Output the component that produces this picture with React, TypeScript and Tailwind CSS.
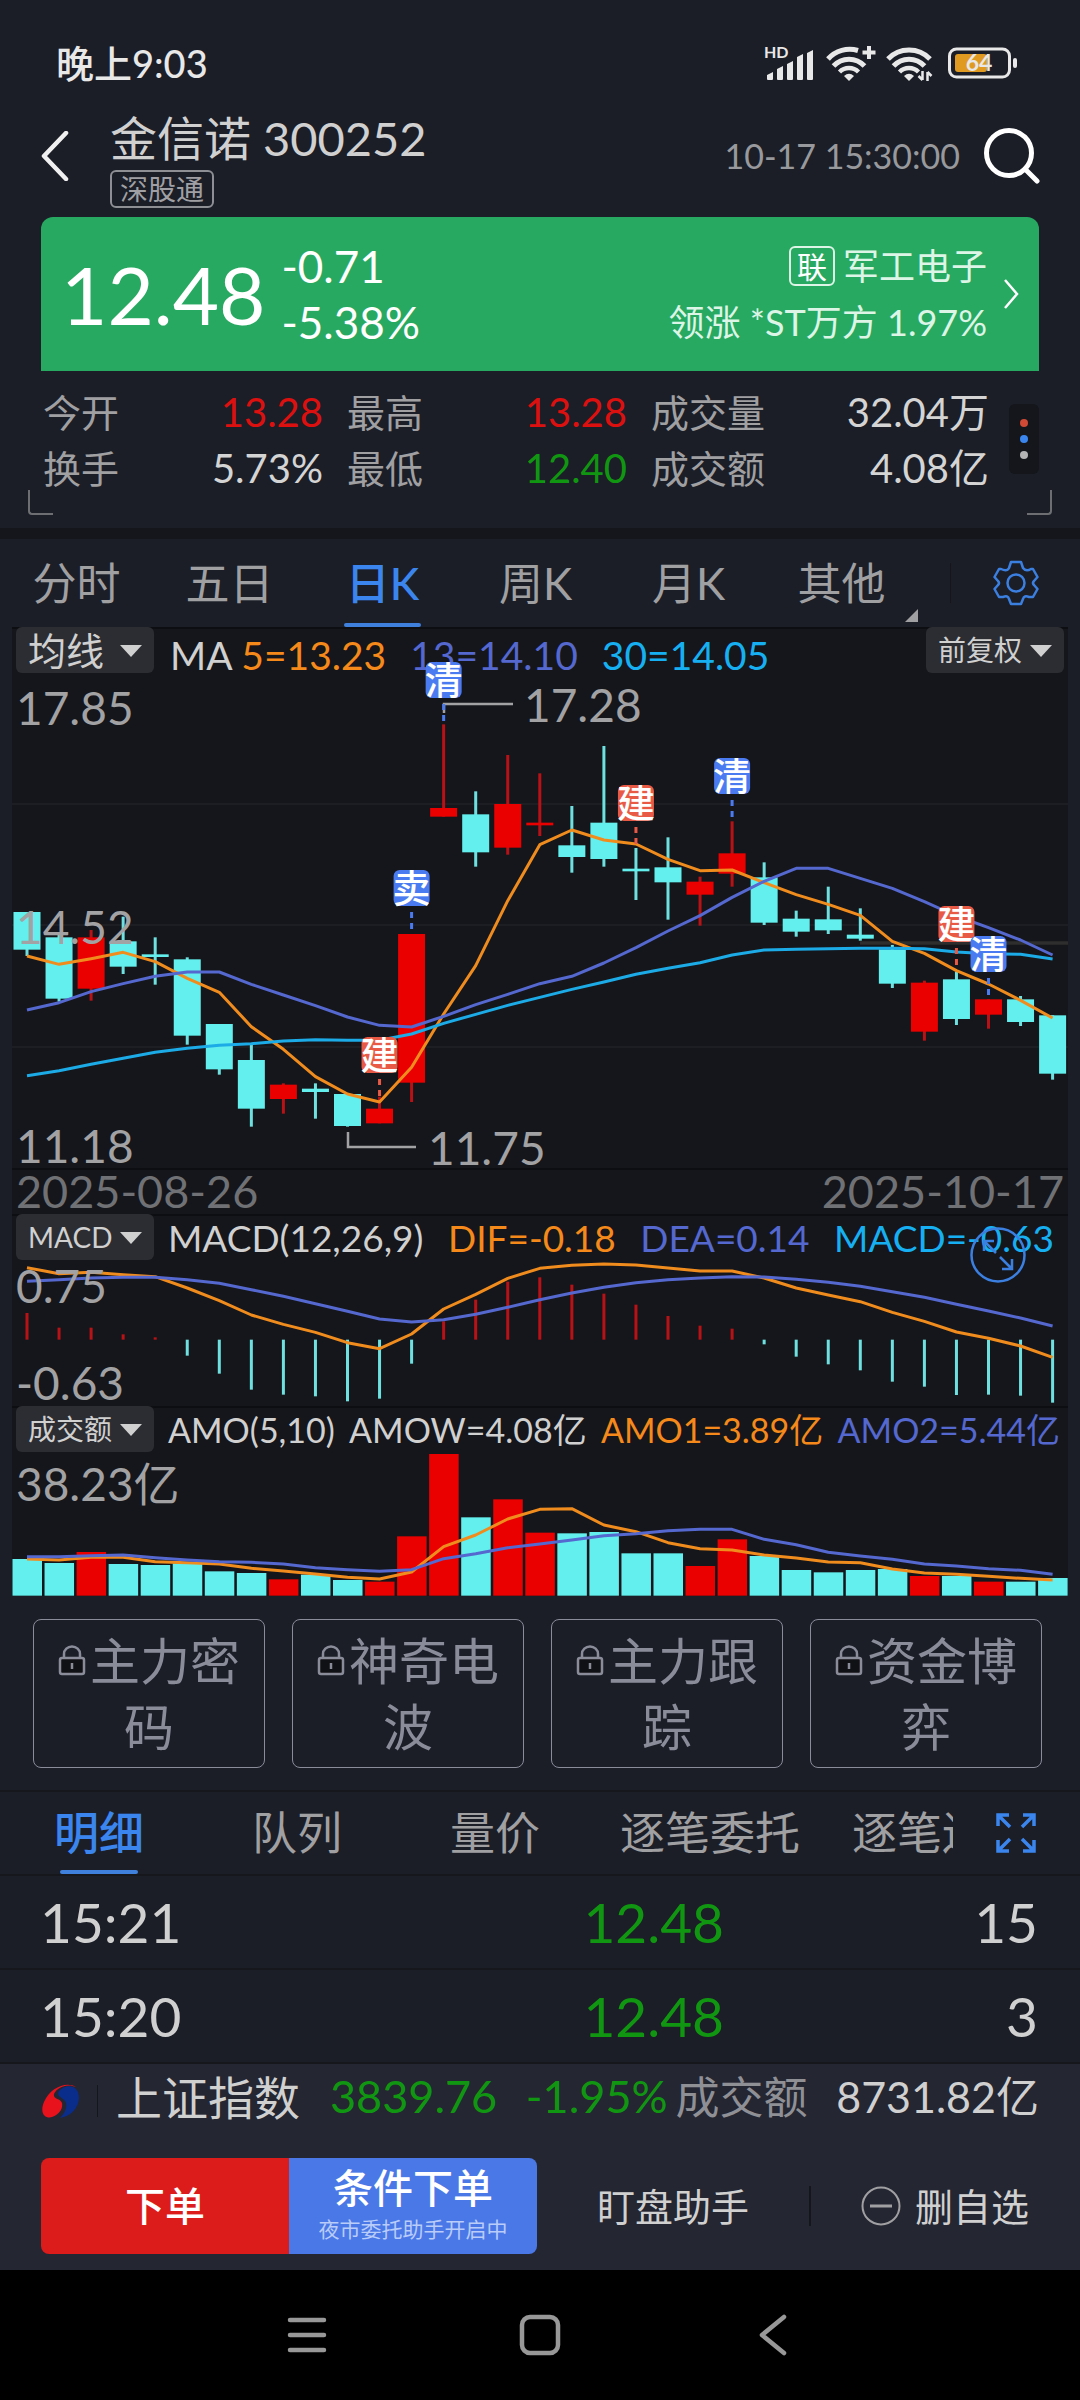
import React from 'react';
import clsx from 'clsx';

// Chart levels are stored at three units per pixel, measured from the top of each panel.
const UNIT = 3;
const STEP = 32.05;
const cx = (i: number) => 15 + i * STEP;

const UP = '#eb0000';
const DOWN = '#63efee';
const UP_LINE = '#b81216';
const DOWN_LINE = '#6de0df';
const ORANGE = '#f08c1e';
const INDIGO = '#5468cf';
const SKY = '#1cabe6';

type Candle = [color: 'r' | 'c', high: number, low: number, top: number, bottom: number];

const candles: Candle[] = [
  ['c', 855, 987, 855, 968],
  ['c', 915, 1124, 931, 1115],
  ['r', 909, 1121, 931, 1085],
  ['c', 869, 1041, 943, 1019],
  ['c', 931, 1073, 982, 990],
  ['c', 991, 1253, 997, 1226],
  ['c', 1191, 1343, 1191, 1327],
  ['c', 1254, 1499, 1299, 1445],
  ['r', 1369, 1460, 1373, 1416],
  ['c', 1369, 1475, 1385, 1395],
  ['c', 1401, 1499, 1401, 1497],
  ['r', 1409, 1489, 1445, 1489],
  ['r', 921, 1425, 921, 1367],
  ['r', 292, 569, 543, 569],
  ['c', 493, 719, 562, 676],
  ['r', 384, 683, 531, 662],
  ['r', 439, 627, 587, 595],
  ['c', 537, 737, 655, 690],
  ['c', 357, 719, 587, 696],
  ['c', 663, 819, 725, 733],
  ['c', 631, 878, 721, 766],
  ['r', 749, 896, 764, 803],
  ['r', 583, 779, 679, 740],
  ['c', 706, 894, 751, 887],
  ['c', 851, 929, 875, 914],
  ['c', 779, 921, 877, 910],
  ['c', 844, 941, 923, 935],
  ['c', 954, 1083, 967, 1070],
  ['r', 1061, 1241, 1067, 1214],
  ['c', 1034, 1194, 1057, 1176],
  ['r', 1117, 1205, 1117, 1163],
  ['c', 1107, 1197, 1117, 1185],
  ['c', 1165, 1358, 1165, 1340],
];

const ma5 = [
  987, 1012, 995, 976, 1004, 1054, 1096, 1199, 1267, 1349, 1401, 1425, 1321, 1161, 1016, 821, 653,
  609, 639, 651, 697, 731, 729, 767, 803, 832, 865, 943, 979, 1031, 1071, 1120, 1173,
];
const ma13 = [
  1149, 1127, 1094, 1070, 1048, 1035, 1035, 1072, 1104, 1136, 1170, 1195, 1200, 1168, 1133, 1102,
  1070, 1048, 1008, 962, 912, 866, 811, 763, 724, 724, 754, 784, 824, 867, 902, 939, 984,
];
const ma30 = [
  1346, 1331, 1312, 1294, 1276, 1264, 1255, 1250, 1242, 1238, 1240, 1240, 1221, 1189, 1162, 1135,
  1111, 1087, 1065, 1042, 1024, 1007, 984, 969, 967, 965, 964, 964, 965, 975, 980, 982, 996,
];

const marks = [
  { i: 13, y: 35, text: '清', color: '#4b7bf0' },
  { i: 12, y: 243, text: '卖', color: '#4b7bf0' },
  { i: 11, y: 410, text: '建', color: '#e85a45' },
  { i: 19, y: 158, text: '建', color: '#e85a45' },
  { i: 22, y: 131, text: '清', color: '#4b7bf0' },
  { i: 29, y: 279, text: '建', color: '#e85a45' },
  { i: 30, y: 309, text: '清', color: '#4b7bf0' },
];

const MACD_ZERO = 377;
const dif = [
  161, 179, 175, 182, 188, 222, 260, 303, 331, 355, 386, 404, 360, 285, 241, 193, 163, 154, 150,
  153, 162, 171, 171, 192, 222, 243, 263, 295, 322, 354, 373, 396, 430,
];
const dea = [
  202, 197, 192, 190, 190, 197, 208, 227, 247, 269, 292, 315, 324, 317, 301, 280, 257, 237, 220,
  206, 197, 192, 188, 189, 196, 205, 217, 233, 250, 271, 291, 312, 336,
];
const macd = [
  297, 341, 341, 361, 370, 425, 479, 527, 542, 547, 562, 554, 449, 322, 257, 203, 190, 212, 239,
  272, 306, 335, 344, 391, 428, 451, 469, 503, 518, 543, 542, 545, 566,
];

const AMO_BASE = 569;
const amo: ['r' | 'c', number][] = [
  ['c', 459], ['c', 471], ['r', 438], ['c', 474], ['c', 477], ['c', 472], ['c', 496], ['c', 501],
  ['r', 520], ['c', 506], ['c', 522], ['r', 527], ['r', 391], ['r', 144], ['c', 334], ['r', 280],
  ['r', 380], ['c', 382], ['c', 378], ['c', 442], ['c', 442], ['r', 480], ['r', 400], ['c', 450],
  ['c', 492], ['c', 499], ['c', 492], ['c', 489], ['r', 510], ['c', 510], ['r', 527], ['c', 527],
  ['c', 516],
];
const amo1 = [
  459, 462, 454, 454, 467, 470, 474, 487, 495, 504, 514, 519, 498, 422, 387, 339, 310, 308, 357,
  377, 410, 428, 432, 447, 456, 468, 470, 489, 501, 505, 511, 517, 522,
];
const amo2 = [
  452, 452, 449, 447, 455, 462, 467, 469, 474, 485, 491, 496, 491, 458, 443, 425, 414, 402, 389,
  383, 374, 370, 370, 400, 416, 439, 450, 460, 474, 480, 488, 493, 505,
];

const Line: React.FC<{ data: number[]; color: string }> = ({ data, color }) => (
  <polyline
    points={data.map((v, i) => `${cx(i)},${v / UNIT}`).join(' ')}
    fill="none"
    stroke={color}
    strokeWidth="3"
    strokeLinejoin="round"
  />
);

const ChartSvg: React.FC<{ height: number; children: React.ReactNode }> = ({ height, children }) => (
  <svg
    viewBox={`0 0 1056 ${height}`}
    preserveAspectRatio="none"
    className="absolute inset-0 w-full h-full pointer-events-none"
    aria-hidden="true"
  >
    {children}
  </svg>
);

const Picker: React.FC<{ label: string; value: string; size: string }> = ({ label, value, size }) => (
  <div className="relative shrink-0 w-[138px] h-[46px]">
    <select
      aria-label={label}
      className={clsx('block appearance-none w-full h-full pl-3 rounded-md bg-[#2c2d32] text-[#d0d0d0] leading-[44px]', size)}
    >
      <option>{value}</option>
    </select>
    <svg viewBox="0 0 22 12" className="absolute right-3 top-[18px] w-[22px] h-3 pointer-events-none">
      <path d="M0 0H22L11 12Z" fill="#d0d0d0" />
    </svg>
  </div>
);

const StatusBar: React.FC = () => (
  <header className="flex items-center justify-between h-[100px] pt-[26px] pl-14 pr-[62px]">
    <span className="text-[38px] leading-none font-medium text-[#e8e8e8]">晚上9:03</span>
    <div className="flex items-center text-[#e8e8e8]">
      <svg viewBox="0 0 50 36" className="w-[50px] h-9 overflow-visible" fill="currentColor">
        <text x="0" y="13" fontSize="16" fontWeight="700">HD</text>
        <path d="M3 30l6-3v7q0 1-1 1h-4q-1 0-1-1zM13 24l6-3v13q0 1-1 1h-4q-1 0-1-1zM23 19l6-3v18q0 1-1 1h-4q-1 0-1-1zM33 12l6-3v25q0 1-1 1h-4q-1 0-1-1zM43 8l6-3v29q0 1-1 1h-4q-1 0-1-1z" />
      </svg>
      <svg viewBox="0 0 50 36" className="w-[50px] h-9 ml-3" fill="none" stroke="currentColor" strokeWidth="5">
        <path d="M2 14A29 29 0 0 1 32 5.500" />
        <path d="M7.500 21A21 21 0 0 1 38.500 21" />
        <path d="M13.500 27A13.500 13.500 0 0 1 32.500 27" strokeWidth="4.500" />
        <path d="M18 31Q23 26.500 28 31L23 36Z" fill="currentColor" stroke="none" />
        <path d="M43 1v13M36.500 7.500h13" strokeWidth="4" />
      </svg>
      <svg viewBox="0 0 50 36" className="w-[50px] h-9 ml-2.5" fill="none" stroke="currentColor" strokeWidth="5">
        <path d="M2 14A29 29 0 0 1 44 14" />
        <path d="M7.500 21A21 21 0 0 1 38.500 21" />
        <path d="M13.500 27A13.500 13.500 0 0 1 32.500 27" strokeWidth="4.500" />
        <path d="M18 31Q23 26.500 28 31L23 36Z" fill="currentColor" stroke="none" />
        <path d="M36.500 26v9M32.500 31l4 4M41.500 36v-9M45.500 31l-4-4" strokeWidth="2.500" />
      </svg>
      <svg viewBox="0 0 70 32" className="w-[70px] h-8 ml-3">
        <rect x="1.500" y="2" width="60" height="28" rx="7" fill="none" stroke="currentColor" strokeWidth="3" />
        <rect x="7" y="7" width="32" height="18" rx="3" fill="#e09a22" />
        <rect x="65" y="11" width="4" height="10" rx="2" fill="currentColor" />
        <text x="31" y="24" textAnchor="middle" fontSize="23" fontWeight="700" fill="currentColor">64</text>
      </svg>
    </div>
  </header>
);

const TitleBar: React.FC = () => (
  <div className="flex items-center h-[117px] pb-1.5 px-[40px]">
    <button aria-label="返回">
      <svg viewBox="0 0 30 50" className="w-[30px] h-[50px]" fill="none" stroke="#f0f0f0" strokeWidth="4.500" strokeLinecap="round" strokeLinejoin="round">
        <path d="M26 2L4 25L26 48" />
      </svg>
    </button>
    <div className="mt-1.5 ml-10 flex flex-col items-start">
      <h1 className="text-[47px] leading-[56px] text-[#d0d0d0] whitespace-nowrap">金信诺 300252</h1>
      <span className="mt-1 px-2 rounded-md border-2 border-[#8d8f94] text-[28px] leading-[34px] text-[#a0a0a4]">深股通</span>
    </div>
    <time className="ml-auto text-[34px] text-[#98999d]">10-17 15:30:00</time>
    <button aria-label="搜索" className="ml-6">
      <svg viewBox="0 0 56 56" className="w-14 h-14" fill="none" stroke="#fff" strokeWidth="5" strokeLinecap="round">
        <circle cx="25" cy="25" r="22.500" />
        <path d="M41 41L53 53" />
      </svg>
    </button>
  </div>
);

const PriceCard: React.FC = () => (
  <section className="flex items-center h-[154px] mx-[41px] pl-5 pr-5 rounded-t-xl bg-[#27a961] text-white">
    <strong className="text-[80px] leading-none font-normal">12.48</strong>
    <div className="ml-4 text-[44px] leading-[56px]">
      <p>-0.71</p>
      <p>-5.38%</p>
    </div>
    <div className="ml-auto text-right text-[36px] leading-[56px] text-[#dcf5e6]">
      <p className="flex items-center justify-end gap-2">
        <span className="px-1.5 rounded-md border-2 border-[#dcf5e6] text-[30px] leading-[36px] text-white">联</span>
        军工电子
      </p>
      <p>领涨 *ST万方 1.97%</p>
    </div>
    <svg viewBox="0 0 16 30" className="w-4 h-[30px] ml-4" fill="none" stroke="#fff" strokeWidth="2.500">
      <path d="M2 1L14 15L2 29" />
    </svg>
  </section>
);

const stats = [
  ['今开', '13.28', 'text-[#dd1010]', '最高', '13.28', 'text-[#dd1010]', '成交量', '32.04万'],
  ['换手', '5.73%', 'text-[#d4d4d4]', '最低', '12.40', 'text-[#119611]', '成交额', '4.08亿'],
];

const Stats: React.FC = () => (
  <section className="relative flex items-start h-[157px] pt-[13px] pl-[43px] pr-[41px]">
    <div className="flex-1 text-[40px] leading-[56px]">
      {stats.map(([a, av, ac, b, bv, bc, c, cv]) => (
        <dl key={a} className="grid grid-cols-[280px_280px_1fr] gap-x-6 text-[#d4d4d4]">
          <div className="flex justify-between">
            <dt className="text-[38px] text-[#a0a0a3]">{a}</dt>
            <dd className={ac}>{av}</dd>
          </div>
          <div className="flex justify-between">
            <dt className="text-[38px] text-[#a0a0a3]">{b}</dt>
            <dd className={bc}>{bv}</dd>
          </div>
          <div className="flex justify-between">
            <dt className="text-[38px] text-[#a0a0a3]">{c}</dt>
            <dd>{cv}</dd>
          </div>
        </dl>
      ))}
    </div>
    <button aria-label="更多" className="flex flex-col items-center justify-center gap-2 w-[30px] h-[70px] mt-5 ml-5 rounded-md bg-[#14161b]">
      <i className="w-2 h-2 rounded-full bg-[#d04a35]" />
      <i className="w-2 h-2 rounded-full bg-[#3b86ee]" />
      <i className="w-2 h-2 rounded-full bg-[#b4b4b4]" />
    </button>
    <i className="absolute left-7 bottom-[13px] w-[25px] h-[25px] border-l-2 border-b-2 border-[#6c6e72] rounded-bl" />
    <i className="absolute right-7 bottom-[13px] w-[25px] h-[25px] border-r-2 border-b-2 border-[#6c6e72] rounded-br" />
  </section>
);

const periods = ['分时', '五日', '日K', '周K', '月K', '其他'];

const PeriodTabs: React.FC = () => (
  <nav className="flex h-[88px]">
    <div className="relative flex-1 grid grid-cols-6">
      {periods.map((p) => (
        <button
          key={p}
          className={clsx(
            'relative text-[44px] leading-none',
            p === '日K' ? 'text-[#3b86ee] font-medium' : 'text-[#a0a0a3]'
          )}
        >
          {p}
          {p === '日K' && <i className="absolute bottom-0 inset-x-[38px] h-1 rounded-sm bg-[#3f80dd]" />}
        </button>
      ))}
      <svg viewBox="0 0 13 13" className="absolute right-0 bottom-[5px] w-[13px] h-[13px]">
        <path d="M13 0V13H0Z" fill="#a0a0a3" />
      </svg>
    </div>
    <div className="flex items-center w-[162px] pl-8">
      <i className="w-px h-10 bg-[#14161b]" />
      <button aria-label="设置" className="ml-[42px]">
        <svg viewBox="0 0 46 46" className="w-[46px] h-[46px]" fill="none" stroke="#3b7fe0" strokeWidth="2.500" strokeLinejoin="round">
          <path d="M18 2H28L30 8Q33 12 38 9L40 9L44.500 17L41 21Q39 23 41 25L44.500 29L40 37L36 37Q31 35 30 39L28 44H18L16 39Q15 35 10 37L6 37L1.500 29L5 25Q7 23 5 21L1.500 17L6 9L8 9Q14 12 16 8Z" />
          <circle cx="23" cy="23" r="8.500" />
        </svg>
      </button>
    </div>
  </nav>
);

const PANEL = 'relative shadow-[inset_0_2px_#0d0e12]';
const AXIS = 'absolute left-1 text-[46px] leading-[48px] text-[#a2a2a4]';

const KLinePanel: React.FC = () => (
  <section className={clsx(PANEL, 'h-[541px]')}>
    <div className="flex items-start gap-4 px-1 text-[39px] leading-[56px] whitespace-nowrap">
      <Picker label="主图指标" value="均线" size="text-[38px]" />
      <span className="text-[#d0d0d0]">MA <b className="font-normal text-[#f5891a]">5=13.23</b></span>
      <span className="text-[#5468cf] pl-2">13=14.10</span>
      <span className="text-[#16b0f2] pl-2">30=14.05</span>
      <div className="ml-auto">
        <Picker label="复权方式" value="前复权" size="text-[28px]" />
      </div>
    </div>
    <ChartSvg height={541}>
      {[177, 298, 420].map((y) => (
        <path key={y} d={`M0 ${y}H1056`} stroke="#202227" strokeWidth="1.500" />
      ))}
      <path d="M848 316H1056" stroke="#2e2e2e" strokeWidth="3.500" />
      {candles.map(([c, high, low, top, bottom], i) => (
        <g key={i}>
          <rect x={cx(i) - 1.5} y={high / UNIT} width="3" height={(low - high) / UNIT} fill={c === 'r' ? UP_LINE : DOWN_LINE} />
          <rect x={cx(i) - 13.5} y={top / UNIT} width="27" height={(bottom - top) / UNIT} fill={c === 'r' ? UP : DOWN} />
        </g>
      ))}
      <Line data={ma5} color={ORANGE} />
      <Line data={ma13} color={INDIGO} />
      <Line data={ma30} color={SKY} />
      <path d="M432 86V77H501M336 505V520H404" fill="none" stroke="#a2a2a4" strokeWidth="2.500" />
      {marks.map(({ i, y, text, color }) => (
        <g key={i}>
          <rect x={cx(i) - 18} y={y} width="36" height="36" rx="6" fill={color} />
          <text x={cx(i)} y={y + 32} textAnchor="middle" fontSize="38" fontWeight="500" fill="#fff">{text}</text>
          <path d={`M${cx(i)} ${y + 42}v17`} stroke={color} strokeWidth="3" strokeDasharray="6 5" />
        </g>
      ))}
    </ChartSvg>
    <span className={clsx(AXIS, 'top-[57px]')}>17.85</span>
    <span className={clsx(AXIS, 'top-[276px]')}>14.52</span>
    <span className={clsx(AXIS, 'top-[495px]')}>11.18</span>
    <span className="absolute left-[512px] top-[54px] text-[46px] leading-[48px] text-[#a2a2a4]">17.28</span>
    <span className="absolute left-[416px] top-[497px] text-[46px] leading-[48px] text-[#a2a2a4]">11.75</span>
  </section>
);

const MacdPanel: React.FC = () => (
  <section className={clsx(PANEL, 'h-[192px]')}>
    <div className="flex items-start px-1 text-[37px] leading-[48px] whitespace-nowrap">
      <Picker label="副图指标一" value="MACD" size="text-[28px]" />
      <div className="flex flex-1 justify-between pl-3.5 pr-2.5">
        <span className="text-[#d0d0d0]">MACD(12,26,9)</span>
        <span className="text-[#f5891a]">DIF=-0.18</span>
        <span className="text-[#5468cf]">DEA=0.14</span>
        <span className="text-[#16b0f2]">MACD=-0.63</span>
      </div>
    </div>
    <ChartSvg height={192}>
      {macd.map((v, i) => (
        <rect
          key={i}
          x={cx(i) - 1.5}
          y={Math.min(v, MACD_ZERO) / UNIT}
          width="3"
          height={Math.abs(v - MACD_ZERO) / UNIT}
          fill={v < MACD_ZERO ? UP_LINE : DOWN_LINE}
        />
      ))}
      <Line data={dif} color={ORANGE} />
      <Line data={dea} color={INDIGO} />
    </ChartSvg>
    <span className={clsx(AXIS, 'top-[48px]')}>0.75</span>
    <span className={clsx(AXIS, 'top-[145px]')}>-0.63</span>
    <button aria-label="展开" className="absolute right-[42px] top-[13px]">
      <svg viewBox="0 0 56 56" className="w-14 h-14" fill="none" stroke="#3b7fe0" strokeWidth="2.500">
        <circle cx="28" cy="28" r="26.500" />
        <path d="M26 26L14 14M14 24V14H24M30 30L42 42M32 42H42V32" />
      </svg>
    </button>
  </section>
);

const AmoPanel: React.FC = () => (
  <section className={clsx(PANEL, 'h-[190px]')}>
    <div className="flex items-start px-1 text-[34px] leading-[48px] whitespace-nowrap">
      <Picker label="副图指标二" value="成交额" size="text-[28px]" />
      <div className="flex flex-1 justify-between pl-3.5 pr-1">
        <span className="text-[#d0d0d0]">AMO(5,10)</span>
        <span className="text-[#d0d0d0]">AMOW=4.08亿</span>
        <span className="text-[#f5891a]">AMO1=3.89亿</span>
        <span className="text-[#5468cf]">AMO2=5.44亿</span>
      </div>
    </div>
    <ChartSvg height={190}>
      {amo.map(([c, top], i) => (
        <rect key={i} x={cx(i) - 14.5} y={top / UNIT} width="29.500" height={(AMO_BASE - top) / UNIT} fill={c === 'r' ? UP : DOWN} />
      ))}
      <Line data={amo1} color={ORANGE} />
      <Line data={amo2} color={INDIGO} />
    </ChartSvg>
    <span className={clsx(AXIS, 'top-[54px]')}>38.23亿</span>
  </section>
);

const locked = ['主力密码', '神奇电波', '主力跟踪', '资金博弈'];

const LockedTools: React.FC = () => (
  <section className="grid grid-cols-4 gap-[27px] pl-[33px] pr-[38px] pt-[23px] pb-[22px]">
    {locked.map((name) => (
      <button
        key={name}
        className="px-3.5 pt-2 pb-[7px] rounded-lg border border-[#8a8c99] text-[50px] leading-[66px] text-[#8a8c99] text-center break-all"
      >
        <svg viewBox="0 0 28 32" className="inline-block w-7 h-8 mr-1 mb-3" fill="none" stroke="currentColor" strokeWidth="2.500">
          <path d="M6 13V9a8 7.500 0 0 1 16 0V13" />
          <rect x="2" y="13" width="24" height="16" rx="2" fill="#101114" />
          <path d="M14 18V24" />
        </svg>
        {name}
      </button>
    ))}
  </section>
);

const detailTabs = ['明细', '队列', '量价', '逐笔委托', '逐笔还原'];

const DetailTabs: React.FC = () => (
  <nav className="flex items-center justify-between h-[86px] border-y-2 border-[#15171d] pr-[44px]">
    <div className="flex h-full w-[953px] overflow-hidden">
      {detailTabs.map((t, i) => (
        <button
          key={t}
          className={clsx(
            'relative shrink-0 min-w-[198px] px-[26px] text-[45px] leading-none whitespace-nowrap',
            i === 0 ? 'text-[#3b86ee] font-medium' : 'text-[#a0a0a3]'
          )}
        >
          {t}
          {i === 0 && <i className="absolute bottom-0 inset-x-[60px] h-1 rounded-sm bg-[#3f80dd]" />}
        </button>
      ))}
    </div>
    <button aria-label="全屏">
      <svg viewBox="0 0 40 40" className="w-10 h-10" fill="none" stroke="#3b86ee" strokeWidth="3.500">
        <path d="M2 13V2H13M2 2L14 14M27 2H38V13M38 2L26 14M2 27V38H13M2 38L14 26M27 38H38V27M38 38L26 26" />
      </svg>
    </button>
  </nav>
);

const ticks = [
  { time: '15:21', price: '12.48', volume: '15' },
  { time: '15:20', price: '12.48', volume: '3' },
];

const TickTable: React.FC = () => (
  <table className="w-full table-fixed border-separate border-spacing-0 text-[55px] leading-none text-[#d0d0d0]">
    <tbody>
      {ticks.map((t) => (
        <tr key={t.time} className="h-[94px]">
          <td className="border-b-2 border-[#15171d] pl-10">{t.time}</td>
          <td className="w-[364px] border-b-2 border-[#15171d] text-right text-[#119611]">{t.price}</td>
          <td className="w-[356px] border-b-2 border-[#15171d] pr-[42px] text-right">{t.volume}</td>
        </tr>
      ))}
    </tbody>
  </table>
);

const BottomBar: React.FC = () => (
  <footer className="bg-[#242632] h-[206px] px-[41px] text-[#d0d0d0]">
    <div className="flex items-center h-[66px] whitespace-nowrap">
      <svg viewBox="0 0 40 40" className="w-10 h-10 mt-2">
        <path d="M35 6C25 0 9 7 3 21C-2 33 5 38 11 36C19 33 22 27 21 22C19 17 12 19 13 13C16 6 26 2 35 6Z" fill="#e8121c" />
        <path d="M18 10C24 3 34 4 37 11C41 23 32 35 19 37C25 31 27 24 24 20C21 16 15 16 18 10Z" fill="#0a2d8c" />
      </svg>
      <i className="w-px h-8 mt-2 ml-4 bg-[#14161b]" />
      <span className="ml-[18px] text-[46px]">上证指数</span>
      <span className="ml-[30px] text-[45px] text-[#119611]">3839.76</span>
      <span className="ml-auto text-[45px] text-[#119611]">-1.95%</span>
      <span className="ml-2 text-[44px] text-[#8f9096]">成交额</span>
      <span className="ml-auto text-[43px]">8731.82亿</span>
    </div>
    <div className="flex items-center mt-7 h-24">
      <div className="flex w-[496px] h-full rounded-lg overflow-hidden text-white text-[40px] font-medium">
        <button className="flex-1 bg-[#dc1b1b]">下单</button>
        <button className="flex-1 bg-[#4a78e6] leading-[46px]">
          条件下单
          <span className="block text-[21px] leading-[36px] font-normal text-[#b9ccfa]">夜市委托助手开启中</span>
        </button>
      </div>
      <div className="flex flex-1 items-center text-[38px]">
        <button className="flex-1">盯盘助手</button>
        <i className="w-0.5 h-10 bg-[#14161b]" />
        <button className="flex items-center gap-3.5 pl-[50px] pr-2.5">
          <svg viewBox="0 0 40 40" className="w-10 h-10" fill="none" stroke="#a0a0a3">
            <circle cx="20" cy="20" r="18.500" strokeWidth="2" />
            <path d="M9 20H31" strokeWidth="3" />
          </svg>
          删自选
        </button>
      </div>
    </div>
  </footer>
);

const SystemNav: React.FC = () => (
  <div className="flex items-center justify-center gap-48 h-[130px] bg-black">
    <button aria-label="最近任务">
      <svg viewBox="0 0 40 40" className="w-10 h-10" stroke="#989898" strokeWidth="4.500" strokeLinecap="round">
        <path d="M3 5H37M3 20H37M3 35H37" />
      </svg>
    </button>
    <button aria-label="主屏幕">
      <svg viewBox="0 0 42 42" className="w-[42px] h-[42px]" fill="none" stroke="#989898" strokeWidth="4.500">
        <rect x="3" y="3" width="36" height="36" rx="8" />
      </svg>
    </button>
    <button aria-label="后退">
      <svg viewBox="0 0 40 42" className="w-10 h-[42px]" fill="none" stroke="#989898" strokeWidth="4.500" strokeLinecap="round" strokeLinejoin="round">
        <path d="M31 3L9 21L31 39" />
      </svg>
    </button>
  </div>
);

const App: React.FC = () => (
  <div className="bg-[#1b1e27] font-['Lato','Noto_Sans_CJK_SC',sans-serif]">
    <StatusBar />
    <TitleBar />
    <PriceCard />
    <Stats />
    <div className="h-[11px] bg-[#15161b]" />
    <PeriodTabs />
    <div className="mx-3 bg-[#15161b]">
      <KLinePanel />
      <div className="flex justify-between h-[46px] px-1 text-[45px] leading-[46px] text-[#707174] shadow-[inset_0_2px_#0d0e12]">
        <time>2025-08-26</time>
        <time>2025-10-17</time>
      </div>
      <MacdPanel />
      <AmoPanel />
    </div>
    <LockedTools />
    <DetailTabs />
    <TickTable />
    <BottomBar />
    <SystemNav />
  </div>
);

export default App;
